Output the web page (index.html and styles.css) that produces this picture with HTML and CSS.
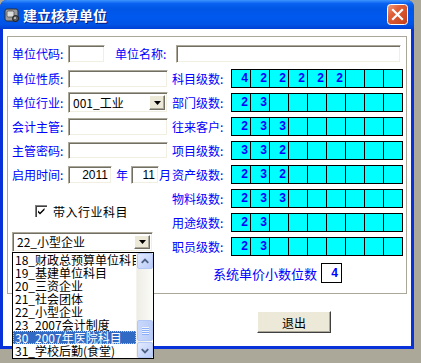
FILE: index.html
```html
<!DOCTYPE html>
<html lang="zh">
<head>
    <meta charset="UTF-8">
    <title>建立核算单位</title>
    <link rel="stylesheet" href="styles.css">
</head>

<body>
    <div class="window">
        <div class="titlebar">
            <svg class="app-icon" width="16" height="16" viewBox="0 0 16 16">
                <rect x="1" y="2" width="13" height="12" rx="2" fill="#9a9a9a" stroke="#2e2e2e"/>
                <rect x="3" y="4" width="7" height="6" rx="1.5" fill="#dcdcdc" stroke="#505050" stroke-width="0.8"/>
                <circle cx="11.5" cy="11.5" r="3" fill="#5a5a5a" stroke="#1e1e1e"/>
                <circle cx="11" cy="11" r="1" fill="#d0d0d0"/>
            </svg>
            <span class="title">建立核算单位</span>
            <button class="close-btn">
                <svg width="21" height="21" viewBox="0 0 21 21">
                    <defs>
                        <linearGradient id="closeFill" x1="0" y1="0" x2="1" y2="1">
                            <stop offset="0" stop-color="#f0a080"/>
                            <stop offset="0.35" stop-color="#e0603a"/>
                            <stop offset="1" stop-color="#c23e18"/>
                        </linearGradient>
                    </defs>
                    <rect x="0.5" y="0.5" width="20" height="20" rx="3" fill="url(#closeFill)" stroke="#ffffff"/>
                    <path d="M6 6 L15 15 M15 6 L6 15" stroke="#ffffff" stroke-width="2.2" stroke-linecap="square"/>
                </svg>
            </button>
        </div>

        <div class="client">
            <div class="frame">
                <div class="row-top">
                    <span class="label">单位代码:</span>
                    <input class="edit code-edit" type="text">
                    <span class="label name-label">单位名称:</span>
                    <input class="edit name-edit" type="text">
                </div>

                <div class="columns">
                    <div class="col-left">
                        <div class="field">
                            <span class="label">单位性质:</span>
                            <input class="edit wide-edit" type="text">
                        </div>
                        <div class="field">
                            <span class="label">单位行业:</span>
                            <div class="combo trade-combo">
                                <span class="combo-text">001_工业</span>
                                <span class="drop-btn">
                                    <svg width="7" height="4" viewBox="0 0 7 4"><polygon points="0,0 7,0 3.5,4" fill="#000"/></svg>
                                </span>
                            </div>
                        </div>
                        <div class="field">
                            <span class="label">会计主管:</span>
                            <input class="edit wide-edit" type="text">
                        </div>
                        <div class="field">
                            <span class="label">主管密码:</span>
                            <input class="edit wide-edit pwd-edit" type="password">
                        </div>
                        <div class="field date-field">
                            <span class="label">启用时间:</span>
                            <input class="edit year-edit" type="text" value="2011">
                            <span class="unit year-unit">年</span>
                            <input class="edit month-edit" type="text" value="11">
                            <span class="unit">月</span>
                        </div>

                        <div class="check-row">
                            <svg class="check-box" width="13" height="13" viewBox="0 0 13 13">
                                <rect x="0" y="0" width="13" height="13" fill="#808080"/>
                                <rect x="1" y="1" width="12" height="12" fill="#ffffff"/>
                                <rect x="1" y="1" width="11" height="11" fill="#404040"/>
                                <rect x="2" y="2" width="10" height="10" fill="#ffffff"/>
                                <rect x="12" y="0" width="1" height="13" fill="#ffffff"/>
                                <rect x="0" y="12" width="13" height="1" fill="#ffffff"/>
                                <path d="M3 5.5 L5 7.5 L9.5 3 V5 L5 9.5 L3 7.5 Z" fill="#000"/>
                            </svg>
                            <span class="check-text">带入行业科目</span>
                        </div>

                        <div class="combo industry-combo">
                            <span class="combo-text">22_小型企业</span>
                            <span class="drop-btn">
                                <svg width="7" height="4" viewBox="0 0 7 4"><polygon points="0,0 7,0 3.5,4" fill="#000"/></svg>
                            </span>

                            <div class="droplist">
                                <div class="droplist-items">
                                    <div class="droplist-item">18_财政总预算单位科目</div>
                                    <div class="droplist-item">19_基建单位科目</div>
                                    <div class="droplist-item">20_三资企业</div>
                                    <div class="droplist-item">21_社会团体</div>
                                    <div class="droplist-item">22_小型企业</div>
                                    <div class="droplist-item">23_2007会计制度</div>
                                    <div class="droplist-item selected">30_2007年医院科目</div>
                                    <div class="droplist-item">31_学校后勤(食堂)</div>
                                </div>
                                <div class="scrollbar">
                                    <div class="scroll-btn">
                                        <svg width="15" height="15" viewBox="0 0 15 15"><polyline points="4,9 7.5,5.5 11,9" fill="none" stroke="#4d6185" stroke-width="2"/></svg>
                                    </div>
                                    <div class="scroll-track">
                                        <div class="scroll-thumb">
                                            <span class="grip"></span>
                                            <span class="grip"></span>
                                            <span class="grip"></span>
                                            <span class="grip"></span>
                                        </div>
                                    </div>
                                    <div class="scroll-btn">
                                        <svg width="15" height="15" viewBox="0 0 15 15"><polyline points="4,6 7.5,9.5 11,6" fill="none" stroke="#4d6185" stroke-width="2"/></svg>
                                    </div>
                                </div>
                            </div>
                        </div>
                    </div>

                    <div class="col-right" id="levelColumn">
                        <div class="decimals-row" id="decimalsRow">
                            <span class="decimals-text">系统单价小数位数</span>
                            <span class="decimals-box">4</span>
                        </div>
                    </div>
                </div>
            </div>

            <div class="footer">
                <button class="btn">退出</button>
            </div>
        </div>
    </div>

    <script>
        const levelRows = [
            { label: '科目级数:', digits: [4, 2, 2, 2, 2, 2] },
            { label: '部门级数:', digits: [2, 3] },
            { label: '往来客户:', digits: [2, 3, 3] },
            { label: '项目级数:', digits: [3, 3, 2] },
            { label: '资产级数:', digits: [2, 3, 2] },
            { label: '物料级数:', digits: [2, 3, 3] },
            { label: '用途级数:', digits: [2, 3] },
            { label: '职员级数:', digits: [2, 3] }
        ];

        const levelColumn = document.getElementById('levelColumn');
        const decimalsRow = document.getElementById('decimalsRow');

        levelRows.forEach(row => {
            const rowElement = document.createElement('div');
            rowElement.classList.add('level-row');

            const labelElement = document.createElement('span');
            labelElement.classList.add('label', 'level-label');
            labelElement.textContent = row.label;

            const gridElement = document.createElement('div');
            gridElement.classList.add('levels');

            for (let i = 0; i < 9; i++)
            {
                const cellElement = document.createElement('span');
                cellElement.classList.add('level-cell');
                cellElement.textContent = i < row.digits.length ? row.digits[i] : '';
                gridElement.appendChild(cellElement);
            }

            rowElement.append(labelElement, gridElement);
            levelColumn.insertBefore(rowElement, decimalsRow);
        });
    </script>
</body>
</html>
```

FILE: styles.css
```css
*
{
    box-sizing: border-box;
}

body
{
    margin: 0;
    width: 421px;
    height: 363px;
    overflow: hidden;
    background-color: #aca899;
    font-family: "Noto Sans CJK SC", sans-serif;
    font-size: 12px;
}

.window
{
    width: 414px;
    height: 349px;
    display: flex;
    flex-direction: column;
    background-color: #0831d9;
    border-radius: 7px 7px 0 0;
}

.titlebar
{
    height: 29px;
    display: flex;
    align-items: center;
    padding: 0 6px 0 4px;
    border-radius: 7px 7px 0 0;
    background: linear-gradient(to bottom, #3d95ff 0%, #0a62f0 12%, #0057e6 30%, #0058ee 60%, #0053e5 85%, #003fd4 100%);
}

.app-icon
{
    margin-right: 3px;
}

.title
{
    color: #ffffff;
    font-weight: bold;
    font-size: 14px;
    line-height: 16px;
    text-shadow: 1px 1px 0 #0a1883;
}

.close-btn
{
    margin-left: auto;
    width: 21px;
    height: 21px;
    padding: 0;
    border: none;
    background: none;
    display: block;
}

.close-btn svg
{
    display: block;
}

.client
{
    flex: 1;
    margin: 0 3px 3px 3px;
    padding: 7px 0 0 4px;
    background-color: #ffffff;
}

.frame
{
    width: 400px;
    height: 258px;
    border: 1px solid #aca899;
    padding: 8px 0 0 4px;
}

.label
{
    color: #0000ff;
    line-height: 14px;
    white-space: nowrap;
    width: 56px;
    flex-shrink: 0;
}

.row-top
{
    display: flex;
    align-items: center;
    height: 18px;
}

.name-label
{
    margin-left: 10px;
    width: 61px;
}

.edit
{
    height: 18px;
    margin: 0;
    padding: 0 3px;
    font-family: "Liberation Sans", sans-serif;
    font-size: 12px;
    background-color: #ffffff;
    border: 1px solid;
    border-color: #aca899 #ffffff #ffffff #aca899;
    box-shadow: inset 1px 1px 0 #716f64, inset -1px -1px 0 #f1efe2;
    outline: none;
}

.code-edit
{
    width: 37px;
}

.name-edit
{
    width: 225px;
}

.wide-edit
{
    width: 100px;
}

.pwd-edit
{
    height: 17px;
}

.date-field
{
    align-items: flex-start;
}

.year-edit
{
    width: 44px;
    text-align: right;
}

.month-edit
{
    width: 28px;
    text-align: right;
}

.unit
{
    color: #0000ff;
    line-height: 18px;
}

.date-field .label
{
    line-height: 18px;
}

.year-unit
{
    margin: 0 3px 0 4px;
}

.columns
{
    display: flex;
    margin-top: 6px;
}

.col-left
{
    width: 160px;
    display: flex;
    flex-direction: column;
    gap: 5px;
}

.field
{
    height: 19px;
    display: flex;
    align-items: center;
}

.combo
{
    position: relative;
    display: flex;
    align-items: center;
    background-color: #ffffff;
    border: 1px solid;
    border-color: #aca899 #ffffff #ffffff #aca899;
    box-shadow: inset 1px 1px 0 #716f64, inset -1px -1px 0 #f1efe2;
    padding: 2px;
}

.trade-combo
{
    width: 100px;
    height: 21px;
}

.industry-combo
{
    width: 141px;
    height: 20px;
    margin-top: 9px;
}

.combo-text
{
    flex: 1;
    padding-left: 2px;
    line-height: 14px;
    color: #000000;
    white-space: nowrap;
}

.drop-btn
{
    width: 16px;
    height: 100%;
    display: flex;
    align-items: center;
    justify-content: center;
    background-color: #ece9d8;
    border: 1px solid;
    border-color: #ffffff #716f64 #716f64 #ffffff;
    box-shadow: inset -1px -1px 0 #aca899;
}

.drop-btn svg
{
    display: block;
}

.check-row
{
    display: flex;
    align-items: center;
    height: 13px;
    margin-top: 16px;
    padding-left: 23px;
    gap: 5px;
}

.check-box
{
    display: block;
    flex-shrink: 0;
}

.check-text
{
    color: #000000;
    line-height: 14px;
    letter-spacing: 0.5px;
}

.droplist
{
    position: absolute;
    top: 19px;
    left: -1px;
    width: 142px;
    height: 107px;
    display: flex;
    background-color: #ffffff;
    border: 1px solid #000000;
}

.droplist-items
{
    flex: 1;
    min-width: 0;
    overflow: hidden;
}

.droplist-item
{
    height: 13px;
    line-height: 13px;
    padding-left: 2px;
    white-space: nowrap;
    color: #000000;
}

.droplist-item.selected
{
    background-color: #316ac5;
    color: #ffffff;
    outline: 1px dotted #f0c060;
    outline-offset: -1px;
}

.scrollbar
{
    width: 17px;
    display: flex;
    flex-direction: column;
    background-color: #f4f3ee;
    padding: 0 0 0 1px;
}

.scroll-btn
{
    height: 16px;
    display: flex;
    align-items: center;
    justify-content: center;
    border: 1px solid #b4c8f6;
    border-radius: 2px;
    background: linear-gradient(to bottom right, #e2eafe, #b9cbf8);
}

.scroll-btn svg
{
    display: block;
}

.scroll-track
{
    flex: 1;
    padding-top: 51px;
    background: linear-gradient(to right, #eeede5, #fbfbf8);
}

.scroll-thumb
{
    height: 21px;
    display: flex;
    flex-direction: column;
    align-items: center;
    justify-content: center;
    gap: 1px;
    border: 1px solid #b4c8f6;
    border-radius: 2px;
    background: linear-gradient(to right, #c9d8fc, #b9cbf8);
}

.grip
{
    width: 7px;
    height: 1px;
    background-color: #eef3fe;
    box-shadow: 0 1px 0 #8cb0f8;
}

.col-right
{
    display: flex;
    flex-direction: column;
    gap: 5px;
}

.level-row
{
    height: 19px;
    display: flex;
    align-items: center;
}

.level-label
{
    width: 59px;
}

.levels
{
    display: grid;
    grid-template-columns: repeat(9, 18px);
    gap: 1px;
    height: 19px;
    background-color: #000000;
    border: 1px solid #000000;
}

.level-cell
{
    background-color: #00ffff;
    color: #0000ff;
    font-family: "Liberation Sans", sans-serif;
    font-weight: bold;
    font-size: 12px;
    line-height: 17px;
    text-align: right;
    padding-right: 2px;
}

.decimals-row
{
    display: flex;
    align-items: center;
    margin-top: 2px;
    padding-left: 41px;
    gap: 4px;
}

.decimals-text
{
    color: #0000ff;
    font-size: 13px;
    line-height: 15px;
}

.decimals-box
{
    width: 21px;
    height: 20px;
    border: 1px solid #000000;
    color: #0000ff;
    font-family: "Liberation Sans", sans-serif;
    font-weight: bold;
    font-size: 12px;
    line-height: 18px;
    text-align: right;
    padding-right: 3px;
}

.footer
{
    margin-top: 17px;
    padding-left: 250px;
}

.btn
{
    width: 74px;
    height: 22px;
    padding: 0;
    font-family: "Noto Sans CJK SC", sans-serif;
    font-size: 12px;
    color: #000000;
    background-color: #ece9d8;
    border: 1px solid;
    border-color: #ffffff #404040 #404040 #ffffff;
    box-shadow: inset -1px -1px 0 #aca899;
}
```
